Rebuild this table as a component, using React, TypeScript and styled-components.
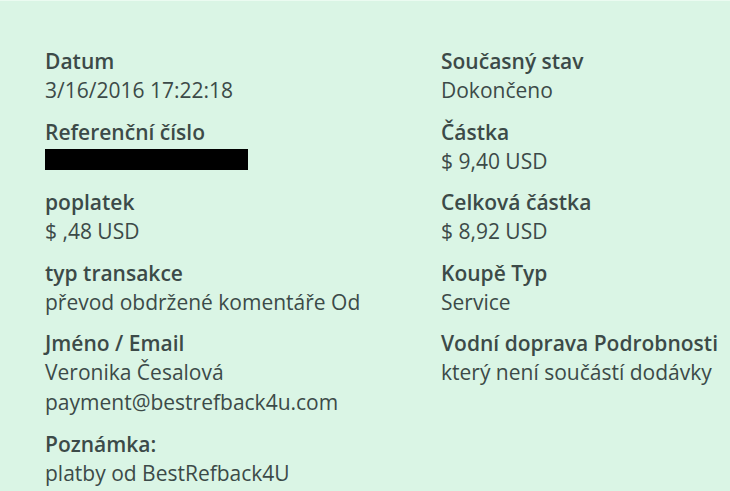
import React from "react";
import styled, { createGlobalStyle } from "styled-components";

const Global = createGlobalStyle`
  html, body { margin: 0; padding: 0; background: #daf5e5; }
  body { font-family: "Open Sans", "Noto Sans", sans-serif; }
`;

const Panel = styled.div`
  box-sizing: border-box;
  width: 730px;
  height: 491px;
  overflow: hidden;
  background: #daf5e5;
  border-top: 1px solid #ebfbf1;
  padding: 47px 0 0 45px;
  display: grid;
  grid-template-columns: 396px 1fr;
  color: #3c4a48;
`;

const Column = styled.dl`
  margin: 0;
  display: flex;
  flex-direction: column;
  gap: 13.5px;
`;

const Field = styled.div`
  display: flex;
  flex-direction: column;
`;

const Label = styled.dt`
  font-size: 21px;
  font-weight: 600;
  line-height: 27px;
  white-space: nowrap;
`;

const Value = styled.dd`
  margin: 0;
  font-size: 21px;
  font-weight: 400;
  line-height: 30px;
  white-space: nowrap;
`;

const Redacted = styled.span`
  display: block;
  width: 203px;
  height: 21px;
  background: #000;
  margin: 3px 0 6px;
`;

type Item = { label: string; values: (string | null)[] };

const left: Item[] = [
  { label: "Datum", values: ["3/16/2016 17:22:18"] },
  { label: "Referenční číslo", values: [null] },
  { label: "poplatek", values: ["$ ,48 USD"] },
  { label: "typ transakce", values: ["převod obdržené komentáře Od"] },
  { label: "Jméno / Email", values: ["Veronika Česalová", "payment@bestrefback4u.com"] },
  { label: "Poznámka:", values: ["platby od BestRefback4U"] },
];

const right: Item[] = [
  { label: "Současný stav", values: ["Dokončeno"] },
  { label: "Částka", values: ["$ 9,40 USD"] },
  { label: "Celková částka", values: ["$ 8,92 USD"] },
  { label: "Koupě Typ", values: ["Service"] },
  { label: "Vodní doprava Podrobnosti", values: ["který není součástí dodávky"] },
];

const renderColumn = (items: Item[]) => (
  <Column>
    {items.map((it) => (
      <Field key={it.label}>
        <Label>{it.label}</Label>
        {it.values.map((v, i) =>
          v === null ? (
            <Value key={i}>
              <Redacted />
            </Value>
          ) : (
            <Value key={i}>{v}</Value>
          )
        )}
      </Field>
    ))}
  </Column>
);

export default function App() {
  return (
    <>
      <Global />
      <Panel>
        {renderColumn(left)}
        {renderColumn(right)}
      </Panel>
    </>
  );
}
